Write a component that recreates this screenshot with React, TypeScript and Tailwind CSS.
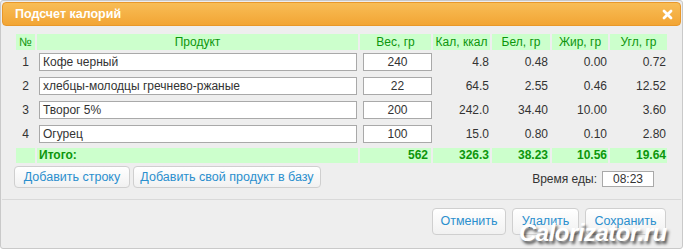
const rows = [
  { n: 1, name: 'Кофе черный', w: '240', kcal: '4.8', p: '0.48', f: '0.00', c: '0.72' },
  { n: 2, name: 'хлебцы-молодцы гречнево-ржаные', w: '22', kcal: '64.5', p: '2.55', f: '0.46', c: '12.52' },
  { n: 3, name: 'Творог 5%', w: '200', kcal: '242.0', p: '34.40', f: '10.00', c: '3.60' },
  { n: 4, name: 'Огурец', w: '100', kcal: '15.0', p: '0.80', f: '0.10', c: '2.80' },
];

const grid = 'grid grid-cols-[19px_321px_71px_57px_58px_56px_57px] gap-x-[2px]';
const head = 'bg-[#ccffcc] text-[#0c960c] text-center leading-[16px] h-[16px]';
const btn =
  'h-[22px] rounded-[4px] border border-[#cfcfcf] bg-gradient-to-b from-white to-[#f1f1f1] text-[#2a8fce] text-[12.5px] leading-[20px] whitespace-nowrap';
const bigBtn =
  'h-[27px] rounded-[4px] border border-[#cfcfcf] bg-gradient-to-b from-white to-[#f1f1f1] text-[#2a8fce] text-[12.5px] whitespace-nowrap';

export default function App() {
  return (
    <div className="w-[685px] h-[250px] bg-white font-['Liberation_Sans',Arial,sans-serif]">
      <div className="relative w-[683px] h-[249px] border border-[#c9c9c9] bg-[#eeeeee] rounded-[3px] p-[1px]">
        {/* title bar */}
        <div className="h-[24px] rounded-[4px] border border-[#e8982a] bg-gradient-to-b from-[#f8bd55] to-[#f2a534] flex items-center justify-between pl-[12px] pr-[7px]">
          <span className="text-white font-bold text-[12.5px]">Подсчет калорий</span>
          <svg width="11" height="11" viewBox="0 0 11 11">
            <path d="M2 2 L9 9 M9 2 L2 9" stroke="white" strokeWidth="2.8" strokeLinecap="round" />
          </svg>
        </div>

        {/* table */}
        <div className="pl-[14px] pt-[8px] text-[12px] text-[#333]">
          <div className={grid}>
            <div className={head}>№</div>
            <div className={head}>Продукт</div>
            <div className={head}>Вес, гр</div>
            <div className={head}>Кал, ккал</div>
            <div className={head}>Бел, гр</div>
            <div className={head}>Жир, гр</div>
            <div className={head}>Угл, гр</div>
          </div>
          {rows.map((r) => (
            <div key={r.n} className={`${grid} h-[24px] items-center`}>
              <div className="text-center">{r.n}</div>
              <div className="pl-[2px]">
                <div className="w-[318px] h-[18px] border border-[#a9a9a9] bg-white pl-[3px] leading-[16px]">{r.name}</div>
              </div>
              <div className="pl-[3px]">
                <div className="w-[69px] h-[18px] border border-[#a9a9a9] bg-white text-center leading-[16px]">{r.w}</div>
              </div>
              <div className="text-right pr-[1px]">{r.kcal}</div>
              <div className="text-right pr-[2px]">{r.p}</div>
              <div className="text-right pr-[1px]">{r.f}</div>
              <div className="text-right pr-[1px]">{r.c}</div>
            </div>
          ))}
          <div className={`${grid} mt-[2px] h-[15px] leading-[15px] font-bold text-[#0c960c]`}>
            <div className="bg-[#ccffcc]" />
            <div className="bg-[#ccffcc] pl-[2px]">Итого:</div>
            <div className="bg-[#ccffcc] text-right pr-[3px]">562</div>
            <div className="bg-[#ccffcc] text-right pr-[1px]">326.3</div>
            <div className="bg-[#ccffcc] text-right pr-[2px]">38.23</div>
            <div className="bg-[#ccffcc] text-right pr-[1px]">10.56</div>
            <div className="bg-[#ccffcc] text-right pr-[1px]">19.64</div>
          </div>
        </div>

        {/* add buttons + meal time */}
        <div className="flex items-center pl-[12px] pr-[27px] mt-[3px] h-[22px]">
          <button className={`${btn} w-[116px]`}>Добавить строку</button>
          <button className={`${btn} w-[188px] ml-[3px]`}>Добавить свой продукт в базу</button>
          <div className="ml-auto flex items-center mt-[4px] text-[12px] text-[#333]">
            <span>Время еды:</span>
            <div className="ml-[5px] w-[52px] h-[16px] border border-[#a9a9a9] bg-white text-center leading-[14px]">08:23</div>
          </div>
        </div>

        <div className="mt-[11px] border-t border-[#d9d9d9]" />

        {/* bottom buttons */}
        <div className="flex justify-end gap-[6px] pr-[15px] mt-[8px]">
          <button className={`${bigBtn} w-[74px]`}>Отменить</button>
          <button className={`${bigBtn} w-[67px]`}>Удалить</button>
          <button className={`${bigBtn} w-[81px]`}>Сохранить</button>
        </div>

        {/* watermark */}
        <div className="absolute left-[518px] top-[219px] text-white italic font-bold text-[24px] leading-[26px] tracking-[-0.5px] [text-shadow:2px_3px_3px_rgba(0,0,0,0.65)]">
          Calorizator.ru
        </div>
      </div>
    </div>
  );
}
